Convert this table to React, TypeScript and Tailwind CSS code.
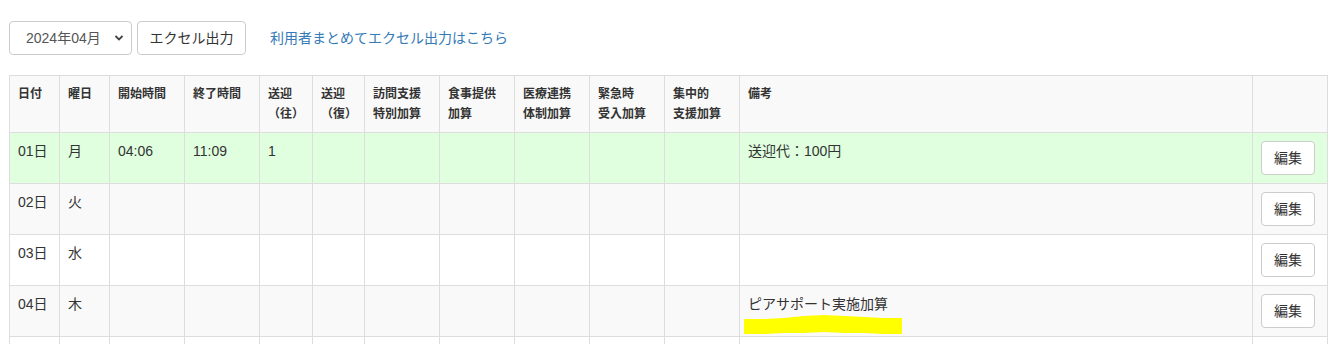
import React from 'react';

const FONT = 'font-["Liberation_Sans","Noto_Sans_CJK_JP",sans-serif]';

const HEADERS: React.ReactNode[] = [
  '日付',
  '曜日',
  '開始時間',
  '終了時間',
  <>送迎<br />（往）</>,
  <>送迎<br />（復）</>,
  <>訪問支援<br />特別加算</>,
  <>食事提供<br />加算</>,
  <>医療連携<br />体制加算</>,
  <>緊急時<br />受入加算</>,
  <>集中的<br />支援加算</>,
  '備考',
  '',
];

const WIDTHS = [50, 50, 75, 75, 53, 52, 75, 75, 75, 75, 75, 513, 75];

type Row = {
  date: string;
  day: string;
  start?: string;
  end?: string;
  pickup?: string;
  note?: string;
  bg: string;
  marker?: boolean;
  hidden?: boolean;
};

const ROWS: Row[] = [
  { date: '01日', day: '月', start: '04:06', end: '11:09', pickup: '1', note: '送迎代：100円', bg: 'bg-[#dfffdf]' },
  { date: '02日', day: '火', bg: 'bg-[#f9f9f9]' },
  { date: '03日', day: '水', bg: 'bg-white' },
  { date: '04日', day: '木', note: 'ピアサポート実施加算', bg: 'bg-[#f9f9f9]', marker: true },
  // next row only peeks in at the bottom edge
  { date: '', day: '', bg: 'bg-white', hidden: true },
];

function Marker() {
  return (
    <svg className="absolute left-[4px] top-[29px]" width="160" height="20" viewBox="0 0 160 20">
      <path
        d="M0 4 L20 4 L40 3 L60 1 L80 0 L100 1 L120 2 L140 3 L158 3 L158 19 L140 19 L120 18 L100 18 L80 17 L60 18 L40 18 L20 19 L0 19 Z"
        fill="#ffff00"
      />
    </svg>
  );
}

export default function App() {
  const cell = 'border border-[#dddddd] px-[8px] py-[8px] align-top text-left';

  return (
    <div className={`${FONT} text-[14px] leading-[20px] text-[#333333] bg-white w-[1342px] h-[344px] overflow-hidden`}>
      <div className="flex items-center pl-[9px] pt-[21px] h-[55px]">
        <div className="relative w-[123px] h-[34px]">
          <select
            defaultValue="2024-04"
            className="appearance-none w-full h-full border border-[#cccccc] rounded-[4px] bg-white pl-[16px] pr-[20px] text-[14px] text-[#555555]"
          >
            <option value="2024-04">2024年04月</option>
          </select>
          <svg className="absolute right-[8px] top-[13px] pointer-events-none" width="10" height="8" viewBox="0 0 10 8">
            <path d="M1.5 2 L5 5.5 L8.5 2" fill="none" stroke="#444444" strokeWidth="1.8" />
          </svg>
        </div>
        <button className="ml-[5px] h-[34px] w-[109px] border border-[#cccccc] rounded-[4px] bg-white text-[14px] text-[#333333]">
          エクセル出力
        </button>
        <a className="ml-[24px] text-[#337ab7] text-[14px]" href="#">
          利用者まとめてエクセル出力はこちら
        </a>
      </div>

      <div className="pl-[9px] pt-[20px]">
        <table className="table-fixed border-collapse w-[1318px]">
          <colgroup>
            {WIDTHS.map((w, i) => (
              <col key={i} style={{ width: w }} />
            ))}
          </colgroup>
          <thead>
            <tr className="bg-[#f9f9f9]">
              {HEADERS.map((h, i) => (
                <th key={i} className={`${cell} text-[12px] font-bold`}>
                  {h}
                </th>
              ))}
            </tr>
          </thead>
          <tbody>
            {ROWS.map((r, idx) => (
              <tr key={idx} className={`${r.bg} h-[51px]`}>
                <td className={cell}>{r.date}</td>
                <td className={cell}>{r.day}</td>
                <td className={cell}>{r.start}</td>
                <td className={cell}>{r.end}</td>
                <td className={cell}>{r.pickup}</td>
                <td className={cell}></td>
                <td className={cell}></td>
                <td className={cell}></td>
                <td className={cell}></td>
                <td className={cell}></td>
                <td className={cell}></td>
                <td className={`${cell} relative`}>
                  {r.note}
                  {r.marker && <Marker />}
                </td>
                <td className={cell}>
                  {!r.hidden && (
                    <button className="h-[34px] w-[54px] border border-[#cccccc] rounded-[4px] bg-white text-[14px] text-[#333333]">
                      編集
                    </button>
                  )}
                </td>
              </tr>
            ))}
          </tbody>
        </table>
      </div>
    </div>
  );
}
